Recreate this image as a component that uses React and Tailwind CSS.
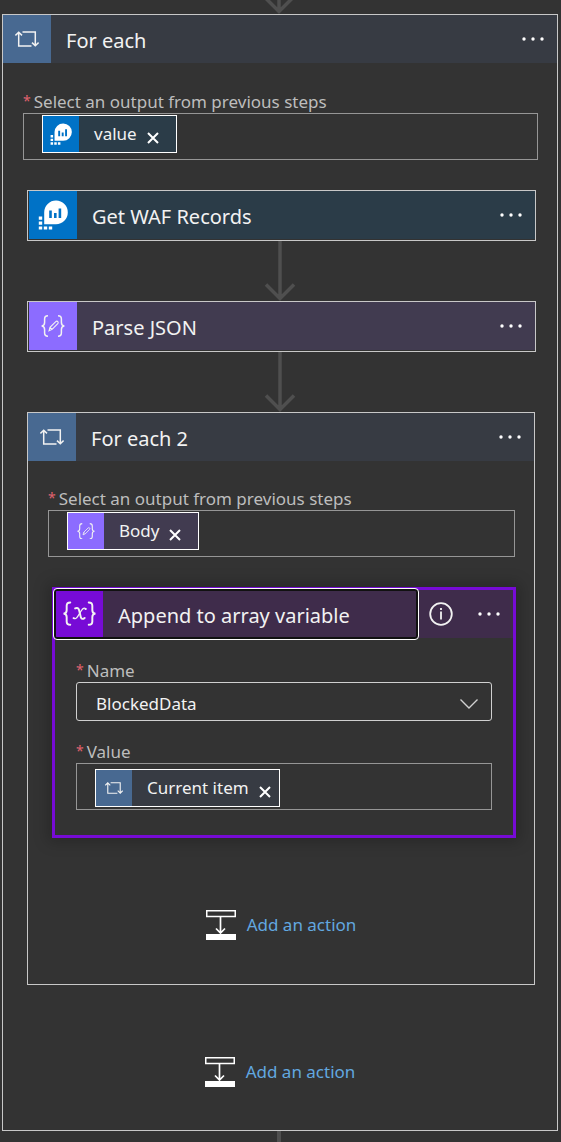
import React from "react";

function LoopIcon({ className }) {
  return (
    <svg viewBox="0 0 24 16" className={className} fill="none" stroke="currentColor" strokeWidth="1.5" aria-hidden="true">
      <path d="M7.500 1H20.300V14.600M17 11.600L20.300 14.800L23.600 11.600" />
      <path d="M16.500 15H3.700V1.400M0.400 4.400L3.700 1.200L7 4.400" />
    </svg>
  );
}

function MonitorIcon({ className }) {
  return (
    <svg viewBox="0 0 30 30" className={className} aria-hidden="true">
      <path d="M6.200 24.200V12.300A11.800 11.800 0 1 1 18 24.200Z" fill="#fff" />
      <path d="M11.200 10.500h2.600v7.500h-2.600zM16 13h2.600v5H16zM20.600 8.500h2.600V18h-2.600z" fill="#0072c6" />
      <path d="M0.800 16.500h3.400v3.200H0.800zM0.800 21.500h3.400v3.200H0.800zM0.800 26.400h3.400v3.200H0.800zM5.800 26.400h3.400v3.200H5.800zM10.800 26.400h3.400v3.200h-3.400z" fill="#fff" />
    </svg>
  );
}

function JsonIcon({ className }) {
  return (
    <svg viewBox="0 0 24 22" className={className} fill="none" stroke="currentColor" strokeWidth="1.5" aria-hidden="true">
      <path d="M7 .8C4.400 .8 3.600 1.800 3.600 4v3.600C3.600 9.800 2.600 10.900 .6 11c2 .1 3 1.200 3 3.400V18c0 2.200.8 3.200 3.400 3.200" />
      <path d="M17 .8c2.600 0 3.400 1 3.400 3.200v3.600c0 2.200 1 3.300 3 3.400-2 .1-3 1.200-3 3.400V18c0 2.200-.8 3.200-3.400 3.200" />
      <path strokeWidth="1.1" d="M8 15.800l1-3.500 5.800-5.700c.6-.6 1.500-.6 2 0s.6 1.400 0 2l-5.700 5.800zM9 12.300l2.100 2.100" />
    </svg>
  );
}

function VariableIcon({ className }) {
  return (
    <svg viewBox="0 0 36 26" className={className} fill="none" stroke="currentColor" strokeWidth="2" strokeLinecap="round" aria-hidden="true">
      <path d="M8.500 1.500C5.500 1.500 4.800 2.500 4.800 5v4.500c0 2.300-1 3.400-3.300 3.500 2.300.1 3.300 1.200 3.300 3.500V21c0 2.500.7 3.500 3.700 3.500" />
      <path d="M27.500 1.500c3 0 3.700 1 3.700 3.500v4.500c0 2.300 1 3.400 3.300 3.500-2.300.1-3.300 1.200-3.300 3.500V21c0 2.500-.7 3.500-3.700 3.500" />
      <path d="M13.500 7.600c2.200-1 3.500-.2 4.100 2l1.700 6.800c.6 2.200 2 2.700 4 1" />
      <path strokeWidth="1.300" d="M24.500 8c-1.500-1.200-3.100-.4-4.500 1.800l-3.800 6c-1.400 2.200-2.900 3-4.500 1.900" />
      <path strokeWidth="2" d="M24.100 8.300h.3M12 17.600h.3" />
    </svg>
  );
}

const kinds = {
  loop: { Icon: LoopIcon, tile: "bg-[#486991]", bar: "bg-[#373b43]", large: "w-6", small: "w-[18px]" },
  monitor: { Icon: MonitorIcon, tile: "bg-[#0072c6]", bar: "bg-[#2b3c48]", large: "w-[30px]", small: "w-[22px]" },
  json: { Icon: JsonIcon, tile: "bg-[#8c6cff]", bar: "bg-[#413b50]", large: "w-6", small: "w-[18px]" },
};

function Dots() {
  return (
    <button type="button" aria-label="More options" className="flex h-12 w-12 shrink-0 items-center justify-center">
      <svg viewBox="0 0 22 4" className="w-[22px] fill-white" aria-hidden="true">
        <circle cx="2" cy="2" r="1.700" />
        <circle cx="11" cy="2" r="1.700" />
        <circle cx="20" cy="2" r="1.700" />
      </svg>
    </button>
  );
}

function Header({ kind, title }) {
  const { Icon, tile, bar, large } = kinds[kind];
  return (
    <div className={`flex h-12 items-center ${bar}`}>
      <button type="button" className="flex h-12 min-w-0 flex-1 items-center text-left">
        <span className={`flex h-12 w-12 shrink-0 items-center justify-center ${tile}`}>
          <Icon className={large} />
        </span>
        <span className="truncate pt-1 pl-[15px] text-[20px] leading-7">{title}</span>
      </button>
      <Dots />
    </div>
  );
}

function ActionCard({ kind, title }) {
  return (
    <div className="mr-[21px] ml-6 border border-[#c8c8c8] pb-px pl-px">
      <Header kind={kind} title={title} />
    </div>
  );
}

function FieldLabel({ htmlFor, children }) {
  return (
    <label htmlFor={htmlFor} className="flex h-6 text-[17px] leading-[26px] whitespace-nowrap text-[#bdbdbd]">
      <span className="mr-[3px] text-[14px] leading-6 text-[#e0626f]">*</span>
      {children}
    </label>
  );
}

function Token({ kind, text, className }) {
  const { Icon, tile, bar, small } = kinds[kind];
  return (
    <span className={`flex h-[38px] shrink-0 items-center border border-white ${bar} ${className}`}>
      <span className={`flex h-9 w-9 shrink-0 items-center justify-center ${tile}`}>
        <Icon className={small} />
      </span>
      <span className="pl-[15px] text-[17px] leading-6">{text}</span>
      <button type="button" aria-label={`Remove ${text}`} className="mt-2 ml-[10px]">
        <svg viewBox="0 0 12 12" className="w-3 stroke-white" strokeWidth="2" aria-hidden="true">
          <path d="M1 1L11 11M11 1L1 11" />
        </svg>
      </button>
    </span>
  );
}

function TokenField({ id, label, kind, text, tokenClass }) {
  return (
    <div>
      <FieldLabel htmlFor={id}>{label}</FieldLabel>
      <div className="flex h-[47px] items-start border border-[#969696] pl-[18px]">
        <Token kind={kind} text={text} className={tokenClass} />
        <input id={id} type="text" className="h-full min-w-0 flex-1 bg-transparent px-2 text-[17px] outline-none" />
      </div>
    </div>
  );
}

function Arrow() {
  return (
    <svg viewBox="0 0 32 60" className="mx-auto block h-[60px] w-8" fill="none" stroke="#4f4f4f" strokeWidth="3.500" aria-hidden="true">
      <path d="M16 0V57M2 43.500L16 57.500L30 43.500" />
    </svg>
  );
}

function AddAction() {
  return (
    <div className="flex justify-center pt-[72px]">
      <button type="button" className="flex h-[30px] items-center gap-[11px]">
        <svg viewBox="0 0 30 30" className="w-[30px]" fill="none" stroke="#fff" aria-hidden="true">
          <path d="M0.750 0.750H29.250V6.500H0.750Z" strokeWidth="1.500" />
          <path d="M14.500 7V23M10 18.500L14.500 23L19 18.500" strokeWidth="1.700" />
          <path d="M0 24H30V30H0Z" fill="#fff" stroke="none" />
        </svg>
        <span className="text-[17px] leading-6 text-[#62a8e0]">Add an action</span>
      </button>
    </div>
  );
}

function VariableCard() {
  return (
    <section className="mt-[30px] mr-[18px] ml-6 border-3 border-[#770bd6] shadow-[0_0_14px_4px_rgba(0,0,0,0.22)]">
      <div className="flex h-12 items-center bg-[#3f2c4b]">
        <button
          type="button"
          className="-m-px flex h-[50px] min-w-0 flex-1 items-center overflow-hidden rounded-[3px] border-2 border-[#111] text-left outline-1 outline-white"
        >
          <span className="flex h-full w-[47px] shrink-0 items-center justify-center bg-[#770bd6]">
            <VariableIcon className="w-[35px]" />
          </span>
          <span className="truncate pt-1 pl-[15px] text-[20px] leading-7">Append to array variable</span>
        </button>
        <button type="button" aria-label="Information" className="flex h-12 w-12 shrink-0 items-center justify-center">
          <svg viewBox="0 0 24 24" className="w-6" fill="none" stroke="currentColor" strokeWidth="1.800" aria-hidden="true">
            <circle cx="12" cy="12" r="10.800" />
            <path d="M12 9.500V17.500M12 6V8" />
          </svg>
        </button>
        <Dots />
      </div>
      <div className="px-[21px] pt-5 pb-[25px]">
        <FieldLabel htmlFor="variable-name">Name</FieldLabel>
        <div className="grid items-center">
          <select
            id="variable-name"
            defaultValue="BlockedData"
            className="col-start-1 row-start-1 h-[39px] w-full appearance-none rounded-[3px] border border-[#d0d0d0] bg-transparent pt-1 pr-10 pl-[19px] text-[17px] leading-6"
          >
            <option>BlockedData</option>
          </select>
          <svg viewBox="0 0 18 10" className="pointer-events-none col-start-1 row-start-1 mt-1 mr-[14px] w-[18px] justify-self-end" fill="none" stroke="#d0d0d0" strokeWidth="1.400" aria-hidden="true">
            <path d="M0.500 0.500L9 9L17.500 0.500" />
          </svg>
        </div>
        <div className="pt-[18px]">
          <TokenField id="variable-value" label="Value" kind="loop" text="Current item" tokenClass="mt-[5px] pr-2" />
        </div>
      </div>
    </section>
  );
}

export default function App() {
  return (
    <main className="min-h-screen overflow-hidden bg-[#333] font-['Noto_Sans','Open_Sans',sans-serif] text-[#f2f2f2]">
      <div className="flex h-[14px] items-end justify-center pr-1">
        <svg viewBox="0 0 32 14" className="h-[14px] w-8" fill="none" stroke="#4f4f4f" strokeWidth="3.500" aria-hidden="true">
          <path d="M16 -4V11M2 -2.500L16 11.500L30 -2.500" />
        </svg>
      </div>
      <section className="mr-[3px] ml-[2px] border border-[#c8c8c8] pb-[43px]">
        <Header kind="loop" title="For each" />
        <div className="mr-[19px] ml-5 pt-[26px] pb-[30px]">
          <TokenField id="outer-source" label="Select an output from previous steps" kind="monitor" text="value" tokenClass="mt-px pr-[17px]" />
        </div>
        <ActionCard kind="monitor" title="Get WAF Records" />
        <Arrow />
        <ActionCard kind="json" title="Parse JSON" />
        <Arrow />
        <section className="mr-[22px] ml-6 border border-[#c8c8c8] pb-11">
          <Header kind="loop" title="For each 2" />
          <div className="mr-[19px] ml-5 pt-[25px]">
            <TokenField id="inner-source" label="Select an output from previous steps" kind="json" text="Body" tokenClass="mt-px pr-[17px]" />
          </div>
          <VariableCard />
          <AddAction />
        </section>
        <AddAction />
      </section>
      <div className="flex justify-center pr-1">
        <div className="h-[11px] w-1 bg-[#4f4f4f]" />
      </div>
    </main>
  );
}
